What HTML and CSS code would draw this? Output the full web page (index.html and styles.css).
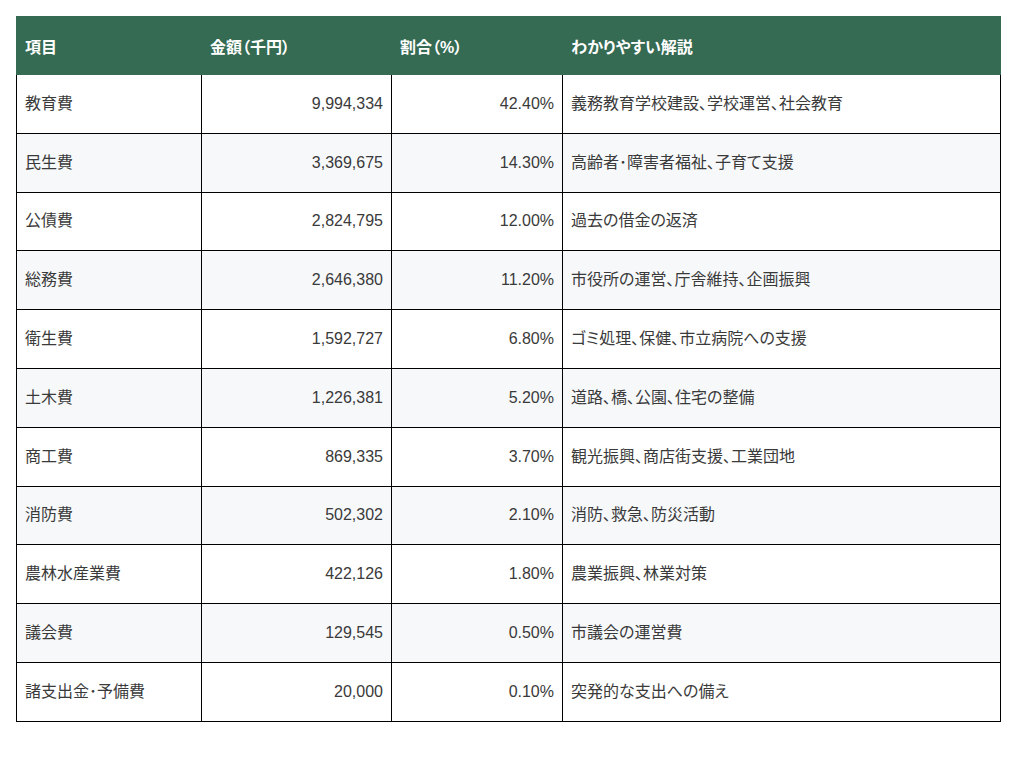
FILE: index.html
```html
<!DOCTYPE html>
<html lang="ja">
<head>
<meta charset="utf-8">
<title>歳出</title>
<link rel="stylesheet" href="styles.css">
</head>
<body>
<table class="budget">
  <colgroup>
    <col class="c1"><col class="c2"><col class="c3"><col class="c4">
  </colgroup>
  <thead>
    <tr><th>項目</th><th>金額（千円）</th><th>割合（%）</th><th>わかりやすい解説</th></tr>
  </thead>
  <tbody>
    <tr><td>教育費</td><td class="num">9,994,334</td><td class="num">42.40%</td><td>義務教育学校建設、学校運営、社会教育</td></tr>
    <tr><td>民生費</td><td class="num">3,369,675</td><td class="num">14.30%</td><td>高齢者･障害者福祉、子育て支援</td></tr>
    <tr><td>公債費</td><td class="num">2,824,795</td><td class="num">12.00%</td><td>過去の借金の返済</td></tr>
    <tr><td>総務費</td><td class="num">2,646,380</td><td class="num">11.20%</td><td>市役所の運営、庁舎維持、企画振興</td></tr>
    <tr><td>衛生費</td><td class="num">1,592,727</td><td class="num">6.80%</td><td>ゴミ処理、保健、市立病院への支援</td></tr>
    <tr><td>土木費</td><td class="num">1,226,381</td><td class="num">5.20%</td><td>道路、橋、公園、住宅の整備</td></tr>
    <tr><td>商工費</td><td class="num">869,335</td><td class="num">3.70%</td><td>観光振興、商店街支援、工業団地</td></tr>
    <tr><td>消防費</td><td class="num">502,302</td><td class="num">2.10%</td><td>消防、救急、防災活動</td></tr>
    <tr><td>農林水産業費</td><td class="num">422,126</td><td class="num">1.80%</td><td>農業振興、林業対策</td></tr>
    <tr><td>議会費</td><td class="num">129,545</td><td class="num">0.50%</td><td>市議会の運営費</td></tr>
    <tr><td>諸支出金･予備費</td><td class="num">20,000</td><td class="num">0.10%</td><td>突発的な支出への備え</td></tr>
  </tbody>
</table>
</body>
</html>
```
FILE: styles.css
```css
html, body {
  margin: 0;
  background: #ffffff;
}
body {
  padding: 16px;
  font-family: "Liberation Sans", "Noto Sans CJK JP", sans-serif;
  font-size: 16px;
  color: #3a3a3a;
  font-feature-settings: "palt";
}
.budget {
  width: 984px;
  border-collapse: collapse;
  table-layout: fixed;
}
.c1 { width: 185px; }
.c2 { width: 190px; }
.c3 { width: 171px; }
.c4 { width: 438px; }
.budget th {
  background: #356a53;
  color: #ffffff;
  font-weight: bold;
  text-align: left;
  padding: 0 8px;
  height: 58px;
  border: 1px solid #356a53;
  box-sizing: border-box;
}
.budget td {
  padding: 0 8px;
  height: 58.8px;
  border: 1px solid #000000;
  box-sizing: border-box;
  line-height: 1.5;
}
.budget tbody tr:nth-child(even) td {
  background: #f7f8fa;
}
.budget td.num {
  text-align: right;
}
```
